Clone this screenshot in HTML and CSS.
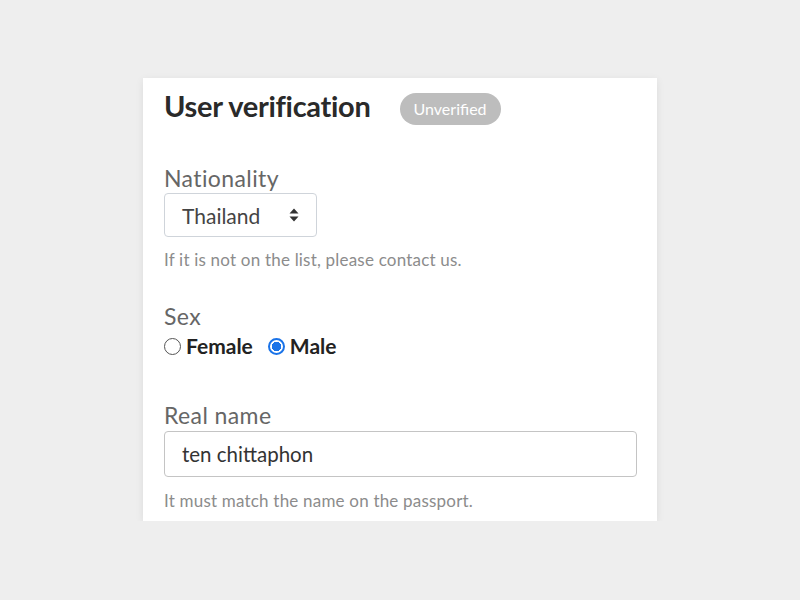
FILE: index.html
```html
<!DOCTYPE html>
<html lang="en">
<head>
<meta charset="utf-8">
<link rel="stylesheet" href="styles.css">
</head>
<body>
<div class="card">
  <div class="header">
    <h1 class="title">User verification</h1>
    <span class="badge">Unverified</span>
  </div>
  <div class="field field-nat">
    <div class="label">Nationality</div>
    <div class="select">
      <span>Thailand</span>
      <svg class="arrows" width="10" height="14" viewBox="0 0 10 14"><path d="M5 0.5 L9.5 5.5 H0.5 Z M5 13.5 L9.5 8.5 H0.5 Z" fill="#333"/></svg>
    </div>
    <div class="hint">If it is not on the list, please contact us.</div>
  </div>
  <div class="field field-sex">
    <div class="label">Sex</div>
    <div class="radios">
      <label class="radio"><span class="dot"></span>Female</label>
      <label class="radio"><span class="dot on"></span>Male</label>
    </div>
  </div>
  <div class="field field-name">
    <div class="label">Real name</div>
    <div class="input">ten chittaphon</div>
    <div class="hint">It must match the name on the passport.</div>
  </div>
</div>
</body>
</html>
```

FILE: styles.css
```css
html, body {
  margin: 0;
  padding: 0;
  background: #eeeeee;
  font-family: Lato, "Liberation Sans", sans-serif;
}
.card {
  box-sizing: border-box;
  width: 514px;
  height: 443px;
  margin: 78px 0 0 143px;
  background: #fff;
  box-shadow: 0 2px 8px rgba(0,0,0,0.08);
  padding: 0 21px;
}
.header {
  display: flex;
  align-items: center;
  height: 54px;
}
.title {
  margin: 0;
  font-size: 29px;
  font-weight: 700;
  color: #2a2a2a;
  letter-spacing: -0.3px;
}
.badge {
  margin: 8px 0 0 29px;
  background: #bdbdbd;
  color: #fff;
  font-size: 16px;
  height: 32px;
  line-height: 32px;
  padding: 0 14px;
  border-radius: 16px;
}
.label {
  font-size: 23px;
  letter-spacing: 0.4px;
  color: #666;
  line-height: 28px;
}
.field-nat { margin-top: 32px; }
.select {
  box-sizing: border-box;
  margin-top: 1px;
  width: 153px;
  height: 44px;
  border: 1px solid #cfd4da;
  border-radius: 4px;
  display: flex;
  align-items: center;
  justify-content: space-between;
  padding: 0 17px 0 17px;
  font-size: 21px;
  color: #444;
}
.hint {
  font-size: 17px;
  letter-spacing: 0.2px;
  line-height: 19px;
  color: #8c8c8c;
  margin-top: 13px;
}
.field-sex { margin-top: 33px; }
.radios {
  display: flex;
  gap: 15px;
  margin-top: 4px;
}
.radio {
  display: flex;
  align-items: center;
  font-size: 21px;
  line-height: 24px;
  font-weight: 700;
  color: #222;
}
.dot {
  box-sizing: border-box;
  width: 17px;
  height: 17px;
  border: 1.5px solid #555;
  border-radius: 50%;
  margin-right: 5px;
  background: #fff;
}
.dot.on {
  border: 2px solid #1a73e8;
  background: radial-gradient(circle, #1a73e8 0 4.5px, #fff 5px);
}
.field-name { margin-top: 43px; }
.input {
  box-sizing: border-box;
  margin-top: 2px;
  width: 473px;
  height: 46px;
  border: 1.5px solid #c4c4c4;
  border-radius: 4px;
  padding: 0 17px;
  display: flex;
  align-items: center;
  font-size: 20.5px;
  color: #333;
}
.field-name .hint { margin-top: 14px; }
```
